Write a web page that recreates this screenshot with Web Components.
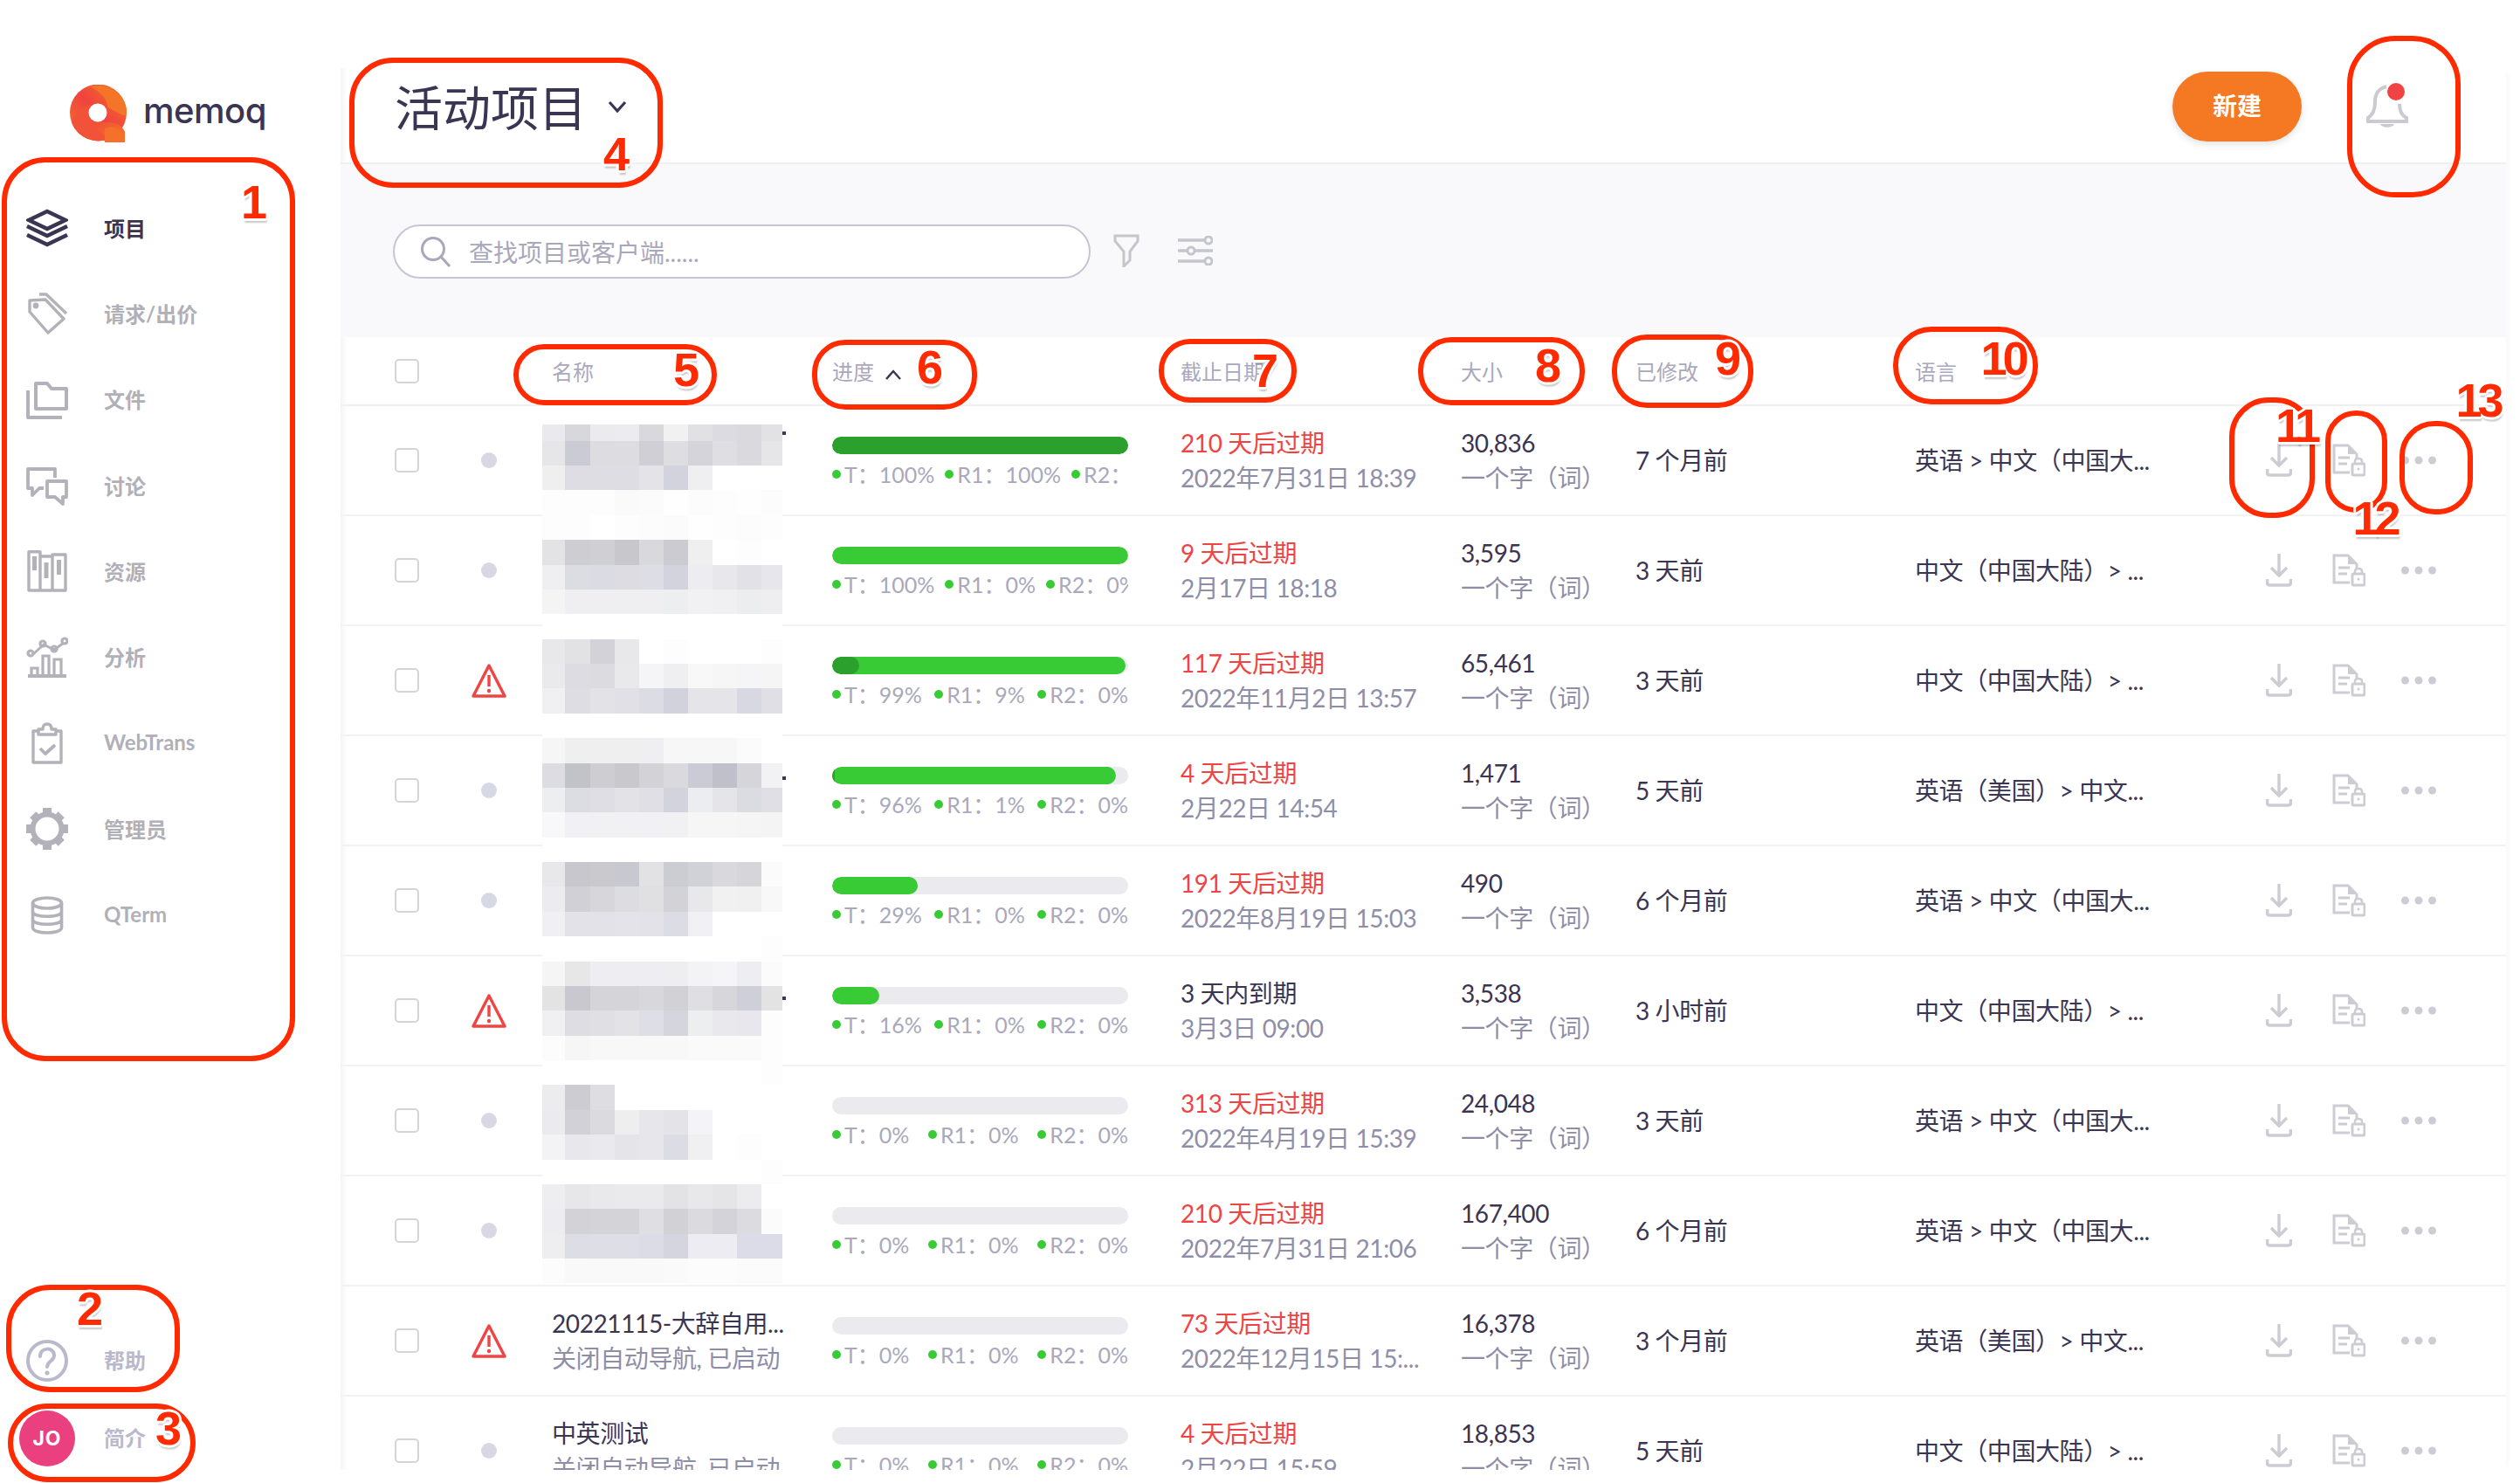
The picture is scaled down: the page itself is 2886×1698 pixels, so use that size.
<!DOCTYPE html>
<html lang="zh">
<head>
<meta charset="utf-8">
<title>memoQ</title>
<style>
  html, body { margin: 0; height: 1698px; overflow: hidden; background: #fff; }
  body { position: relative; font-family: Lato, "Noto Sans CJK SC", sans-serif; color: #3a3553; }
  #app { display: flex; height: 1698px; }
</style>
</head>
<body>
<div id="app">
  <memoq-sidebar></memoq-sidebar>
  <project-panel></project-panel>
</div>
<div id="notes"></div>

<script>
const FONT = 'Lato, "Noto Sans CJK SC", sans-serif';

const NAV_ICONS = {
    layers: `<svg viewBox="0 0 48 48" fill="none" stroke="#3a3553" stroke-width="4.5"><path d="M24 5 L45 15 L24 25 L3 15 Z"/><path d="M1 22 L24 33 L47 22"/><path d="M1 32 L24 43 L47 32"/></svg>`,
    tag: `<svg viewBox="0 0 48 48" fill="none" stroke="#b3b2ba" stroke-width="3.4" stroke-linejoin="round"><path d="M4 9 L4 22 L25 46 L43 30 L22 8 Z"/><circle cx="11" cy="15" r="3.4" fill="#b3b2ba" stroke="none"/><path d="M15 2 L23 2 L46 24"/></svg>`,
    folder: `<svg viewBox="0 0 48 48" fill="none" stroke="#b3b2ba" stroke-width="4" stroke-linejoin="round"><path d="M11 5 L24 5 L29 11 L46 11 L46 34 L11 34 Z"/><path d="M2 13 L2 44 L41 44"/></svg>`,
    chat: `<svg viewBox="0 0 48 48" fill="none" stroke="#b3b2ba" stroke-width="3.8" stroke-linejoin="round"><path d="M33 15 V5 H2 V27 H7 V35 L15 27 H20"/><path d="M24 19 H46 V37 H42 V45 L33 37 H24 Z"/></svg>`,
    books: `<svg viewBox="0 0 48 48" fill="none" stroke="#b3b2ba" stroke-width="3.4" stroke-linejoin="round"><path d="M3 1.700 H16 V46 H3 Z M16 7 H30 V46 H16 Z M30 5 H45 V46 H30 Z"/><path d="M9.500 7 V23 M23 14 V32 M37.500 11 V28" stroke-width="5"/></svg>`,
    chart: `<svg viewBox="0 0 48 48" fill="none" stroke="#b3b2ba" stroke-width="3.2"><path d="M8 20 L20 9 L32 15 L43 7" stroke-width="3"/><circle cx="5" cy="19" r="3" /><circle cx="19" cy="8" r="3"/><circle cx="32" cy="14" r="3"/><circle cx="44" cy="5" r="3"/><path d="M6 44 V36 H13 V44 M19 44 V22 H26 V44 M32 44 V26 H40 V44"/><path d="M2 45 H46" stroke-width="4"/></svg>`,
    clipboard: `<svg viewBox="0 0 48 48" fill="none" stroke="#b3b2ba" stroke-width="3.4" stroke-linejoin="round"><path d="M14 10 L8 10 L8 46 L40 46 L40 10 L34 10"/><path d="M14 14 L14 8 L19 8 Q19 2 24 2 Q29 2 29 8 L34 8 L34 14 Z"/><path d="M16 30 L22 36 L33 26" stroke-width="3.8"/></svg>`,
    gear: `<svg viewBox="0 0 48 48"><circle cx="24" cy="24" r="16.5" fill="none" stroke="#b3b2ba" stroke-width="6"/><g fill="#b3b2ba"><rect x="19" y="0" width="10" height="7"/><rect x="19" y="41" width="10" height="7"/><rect x="0" y="19" width="7" height="10"/><rect x="41" y="19" width="7" height="10"/><rect x="19" y="1" width="10" height="7" transform="rotate(45 24 24)"/><rect x="19" y="1" width="10" height="7" transform="rotate(135 24 24)"/><rect x="19" y="1" width="10" height="7" transform="rotate(225 24 24)"/><rect x="19" y="1" width="10" height="7" transform="rotate(315 24 24)"/></g></svg>`,
    database: `<svg viewBox="0 0 48 48" fill="none" stroke="#b3b2ba" stroke-width="3.6"><ellipse cx="24" cy="10" rx="16.5" ry="6"/><path d="M7.500 10 V38 C7.500 46 40.500 46 40.500 38 V10"/><path d="M7.500 20 C7.500 27 40.500 27 40.500 20"/><path d="M7.500 29 C7.500 36 40.500 36 40.500 29"/></svg>`,
    help: `<svg viewBox="0 0 48 48" fill="none" stroke="#b9b8cc" stroke-width="4"><circle cx="24" cy="24" r="22"/><path d="M16 19 C16 8 32 8 32 18 C32 25 24 24 24 31" stroke-linecap="round"/><circle cx="24" cy="38" r="2.500" fill="#b9b8cc" stroke="none"/></svg>`
};

class NavItem extends HTMLElement {
    constructor() {
        super();
        this.attachShadow({ mode: 'open' });
    }

    connectedCallback() {
        const icon = this.getAttribute('icon');
        const active = this.hasAttribute('active');
        const color = this.getAttribute('color') || (active ? '#3a3553' : '#b1b0b8');
        this.shadowRoot.innerHTML = `
            <style>
                :host { display: flex; align-items: center; height: 98.300px; padding-left: 30px; }
                .icon { width: 48px; height: 48px; flex: none; }
                .icon svg { display: block; width: 48px; height: 48px; }
                .label { margin-left: 41px; font: 700 24px ${FONT}; color: ${color}; position: relative; top: -1px; }
            </style>
            <div class="icon">${NAV_ICONS[icon]}</div>
            <div class="label"><slot></slot></div>
        `;
    }
}
customElements.define('nav-item', NavItem);

class MemoqSidebar extends HTMLElement {
    constructor() {
        super();
        this.attachShadow({ mode: 'open' });
        this.shadowRoot.innerHTML = `
            <style>
                :host { display: flex; flex-direction: column; flex: none; width: 390px; height: 1698px; background: #fff; }
                .logo { display: flex; align-items: center; height: 65px; margin-top: 97px; margin-left: 80px; }
                .logo svg { width: 66px; height: 66px; flex: none; }
                .logo span { margin-left: 18px; font: 500 40px Inter, sans-serif; letter-spacing: -.5px; color: #3a3553; position: relative; top: -3px; }
                nav { margin-top: 50px; }
                .bottom { margin-top: auto; padding-bottom: 11px; }
                .profile { display: flex; align-items: center; height: 80px; padding-left: 22px; }
                .avatar { width: 64px; height: 64px; border-radius: 50%; background: #ea4080; color: #fff;
                    font: 700 23px Inter, sans-serif; display: flex; align-items: center; justify-content: center; letter-spacing: 1px; }
                .profile span { margin-left: 33px; font: 700 24px ${FONT}; color: #b9b8cc; position: relative; top: -2px; }
            </style>
            <div class="logo">
                <svg viewBox="0 0 66 66">
                    <defs>
                        <linearGradient id="a" x1="0" y1="1" x2="1" y2="0"><stop offset="0" stop-color="#f57823"/><stop offset=".5" stop-color="#f0433f"/><stop offset="1" stop-color="#f57823"/></linearGradient>
                        <linearGradient id="b" x1="0" y1="0" x2="1" y2="1"><stop offset="0" stop-color="#f0433f"/><stop offset="1" stop-color="#f57823"/></linearGradient>
                    </defs>
                    <circle cx="32.500" cy="32" r="32.500" fill="url(#a)"/>
                    <path d="M23 2 C34 8 44 16 43 26 C54 30 64 40 65 32 C66 14 46 -4 23 2 Z" fill="#f47428"/>
                    <path d="M2 42 C6 30 16 24 24 23 C20 35 30 52 47 62 C30 68 8 62 2 42 Z" fill="#f25238"/>
                    <path d="M22 35 C26 48 40 64 63 65 L63 54 C60 46 52 43 44 43 C36 44 26 42 22 35 Z" fill="url(#b)"/>
                    <path d="M40 50 C52 46 62 50 63 66 L40 66 Z" fill="#f4702b"/>
                    <circle cx="32" cy="32" r="10.500" fill="#fff"/>
                </svg>
                <span>memoq</span>
            </div>
            <nav>
                <nav-item icon="layers" active>项目</nav-item>
                <nav-item icon="tag">请求/出价</nav-item>
                <nav-item icon="folder">文件</nav-item>
                <nav-item icon="chat">讨论</nav-item>
                <nav-item icon="books">资源</nav-item>
                <nav-item icon="chart">分析</nav-item>
                <nav-item icon="clipboard">WebTrans</nav-item>
                <nav-item icon="gear">管理员</nav-item>
                <nav-item icon="database">QTerm</nav-item>
            </nav>
            <div class="bottom">
                <nav-item icon="help" color="#b9b8cc">帮助</nav-item>
                <div class="profile"><div class="avatar">JO</div><span>简介</span></div>
            </div>
        `;
    }
}
customElements.define('memoq-sidebar', MemoqSidebar);

class PanelHeader extends HTMLElement {
    constructor() {
        super();
        this.attachShadow({ mode: 'open' });
        this.shadowRoot.innerHTML = `
            <style>
                :host { display: flex; align-items: flex-start; height: 108px; padding-left: 62px; border-bottom: 2px solid #f0f0f4; }
                h1 { margin: 0; font: 400 55px/90px ${FONT}; color: #3a3553; }
                .chev { margin: 37px 0 0 24px; width: 22px; height: 14px; }
                button { margin: 4px 0 0 auto; width: 148px; height: 80px; border: 0; padding: 0 0 5px; border-radius: 40px; background: #f57823;
                    color: #fff; font: 700 28px ${FONT}; box-shadow: 0 3px 8px rgba(0,0,0,.12); }
                .bell { margin: 17px 112px 0 74px; width: 48px; height: 52px; }
                .bell svg { display: block; width: 48px; height: 52px; overflow: visible; }
            </style>
            <h1>活动项目</h1>
            <svg class="chev" viewBox="0 0 22 14" fill="none" stroke="#3a3553" stroke-width="3.200"><path d="M2 2 L11 12 L20 2"/></svg>
            <button>新建</button>
            <div class="bell">
                <svg viewBox="0 0 48 52" fill="none" stroke="#cacad0" stroke-width="4">
                    <path d="M23 4 C12 7 10 14 10 22 C10 30 8 36 2 40 L2 44 L46 44 L46 40 C40 37 38 32 38 24"/>
                    <path d="M16 47 C18 52 30 52 32 47 Z" fill="#cacad0" stroke="none"/>
                    <circle cx="34" cy="10" r="10" fill="#f04444" stroke="none"/>
                </svg>
            </div>
        `;
    }
}
customElements.define('panel-header', PanelHeader);

class PanelToolbar extends HTMLElement {
    constructor() {
        super();
        this.attachShadow({ mode: 'open' });
        this.shadowRoot.innerHTML = `
            <style>
                :host { display: flex; align-items: flex-start; height: 129px; padding: 69px 0 0 60px; background: #f9f9fb; }
                .search { display: flex; align-items: center; box-sizing: border-box; width: 799px; height: 62px;
                    border: 2px solid #c6c5d6; border-radius: 31px; background: #fff; padding-left: 29px; }
                .search svg { width: 36px; height: 36px; flex: none; }
                .search span { margin-left: 20px; font: 400 28px ${FONT}; color: #a9a8bb; }
                .filter { margin: 11px 0 0 26px; width: 30px; height: 38px; }
                .tune { margin: 13px 0 0 44px; width: 40px; height: 34px; }
            </style>
            <div class="search">
                <svg viewBox="0 0 36 36" fill="none" stroke="#a9a8bb" stroke-width="3"><circle cx="15" cy="15" r="12.500"/><path d="M24 24 L34 35"/></svg>
                <span>查找项目或客户端......</span>
            </div>
            <svg class="filter" viewBox="0 0 30 38" fill="none" stroke="#c5c5cc" stroke-width="3"><path d="M2 2 H28 V8 L19 20 V30 L12 37 V20 L2 8 Z"/></svg>
            <svg class="tune" viewBox="0 0 40 34" fill="none" stroke="#c5c5cc" stroke-width="3"><path d="M0 5 H30 M0 17 H10 M20 17 H40 M0 29 H30" stroke-width="3.500"/><circle cx="35" cy="5" r="4" /><circle cx="15" cy="17" r="4"/><circle cx="35" cy="29" r="4"/></svg>
        `;
    }
}
customElements.define('panel-toolbar', PanelToolbar);

// positions of the table columns, shared by the header and the rows
const TABLE_GRID = `display: grid; grid-template-columns: 84px 48px 48px 321px 399px 321px 200px 320px 402px 1fr; padding-left: 62px; align-items: center;`;

class TableHead extends HTMLElement {
    constructor() {
        super();
        this.attachShadow({ mode: 'open' });
        this.shadowRoot.innerHTML = `
            <style>
                :host { ${TABLE_GRID} height: 77px; border-bottom: 2px solid #f0f0f3; font: 400 24px ${FONT}; color: #a9a8bc; }
                .box { width: 28px; height: 28px; box-sizing: border-box; border: 2px solid #d4d4d9; border-radius: 5px; }
                .sort { display: inline-block; margin-left: 12px; width: 20px; height: 12px; }
            </style>
            <div><div class="box"></div></div>
            <div style="grid-column: 4">名称</div>
            <div>进度<svg class="sort" viewBox="0 0 20 12" fill="none" stroke="#3a3553" stroke-width="2.400"><path d="M2 11 L10 2 L18 11"/></svg></div>
            <div>截止日期</div><div>大小</div><div>已修改</div><div>语言</div>
        `;
    }
}
customElements.define('table-head', TableHead);

const ROW_ICONS = `
    <svg width="30" height="38" viewBox="0 0 30 38" fill="none" stroke="#cdccd4" stroke-width="3.400"><path d="M15 0 V24 M6 16 L15 25 L24 16"/><path d="M1.500 29 V33 Q1.500 36 4.500 36 H25.500 Q28.500 36 28.500 33 V29" stroke-width="3.600"/></svg>
    <svg width="38" height="38" viewBox="0 0 38 38" fill="none" stroke="#cdccd4" stroke-width="3"><path d="M20 33 H2 V2 H18 L28 12 V17"/><path d="M18 2 V12 H28" fill="#cdccd4" stroke="none"/><path d="M7 16 H20 M7 23 H17"/><rect x="23" y="23" width="14" height="13" rx="1.500" stroke-width="3"/><path d="M26 23 V20 Q26 17 30 17 Q34 17 34 20 V23" stroke-width="2.500"/><circle cx="30" cy="29" r="1.500" fill="#cdccd4" stroke="none"/></svg>
    <svg width="40" height="10" viewBox="0 0 40 10" fill="#cdccd4"><circle cx="4.500" cy="5" r="4.500"/><circle cx="20" cy="5" r="4.500"/><circle cx="35.500" cy="5" r="4.500"/></svg>`;

class ProjectRow extends HTMLElement {
    constructor() {
        super();
        this.attachShadow({ mode: 'open' });
    }

    render(p) {
        const status = p.warn
            ? `<svg class="warn" viewBox="0 0 40 40" fill="none" stroke="#f04444" stroke-width="3.400"><path d="M20 3 L38 38 H2 Z" stroke-linejoin="round"/><path d="M20 14 V27" stroke-width="3.400"/><circle cx="20" cy="32" r="2.200" fill="#f04444" stroke="none"/></svg>`
            : `<div class="dot"></div>`;
        const name = p.name ? `<div>${p.name}</div><div class="sub">关闭自动导航, 已启动</div>` : '';
        const legend = [['T', p.t], ['R1', p.r1], ['R2', p.r2]].map(([k, v]) =>
            `<span class="item"><i></i>${k}：<b>${v}%</b></span>`).join('');
        this.shadowRoot.innerHTML = `
            <style>
                :host { ${TABLE_GRID} box-sizing: border-box; height: 126px; border-bottom: 2px solid #f2f2f4;
                    font: 400 28px ${FONT}; color: #3a3553; }
                .box { width: 28px; height: 28px; box-sizing: border-box; border: 2px solid #d4d4d9; border-radius: 5px; }
                .status { display: flex; justify-content: center; }
                .dot { width: 18px; height: 18px; border-radius: 50%; background: #d8d8e4; }
                .warn { width: 40px; height: 40px; }
                .cell { line-height: 40px; white-space: nowrap; letter-spacing: -.4px; }
                .sub { color: #8f8ea8; }
                .due { color: #f04444; }
                .bar { position: relative; width: 339px; height: 20px; border-radius: 10px; background: #ebebef; overflow: hidden; }
                .bar div { position: absolute; left: 0; top: 0; height: 100%; border-radius: 10px; }
                .light { background: #39cb35; }
                .dark { background: #2ca02c; }
                .legend { display: flex; justify-content: space-between; gap: 12px; width: 339px; overflow: hidden; margin-top: 11px;
                    font: 400 25px/24px ${FONT}; letter-spacing: 0; color: #a9a8bc; white-space: nowrap; }
                .item { flex: none; display: inline-flex; align-items: center; }
                .item i { width: 10px; height: 10px; border-radius: 50%; background: #39cb35; margin-right: 4px; }
                .item b { font-weight: 400; margin-left: 0; }
                .actions { display: flex; align-items: center; }
                .actions svg:nth-child(2) { margin-left: 46px; }
                .actions svg:nth-child(3) { margin-left: 41px; }
            </style>
            <div><div class="box"></div></div>
            <div class="status">${status}</div>
            <div class="cell" style="grid-column: 4">${name}</div>
            <div class="cell">
                <div class="bar">
                    ${p.t ? `<div class="light" style="width:${p.t}%"></div>` : ''}
                    ${p.r1 ? `<div class="dark" style="width:${p.r1}%"></div>` : ''}
                </div>
                <div class="legend">${legend}</div>
            </div>
            <div class="cell"><div class="${p.ok ? '' : 'due'}">${p.due}</div><div class="sub">${p.date}</div></div>
            <div class="cell"><div>${p.size}</div><div class="sub">一个字（词）</div></div>
            <div class="cell">${p.mod}</div>
            <div class="cell">${p.lang}</div>
            <div class="actions">${ROW_ICONS}</div>
        `;
    }
}
customElements.define('project-row', ProjectRow);

// redaction over the name column: grey levels, one row of the mosaic per string
const MOSAIC = [
    'eaeaee d8d8dc ebebed ececf0 d9d9dd f1f1f1 e1e1e3 dbdbe1 dadade e2e2e4',
    'e6e6e8 cbcbd5 dddde1 dddde1 cfcfd5 dddde2 d4d4da dedee3 d9d9de e6e6e8',
    'efeff0 dddde3 dddde3 dddde3 e3e3e8 d3d3dd efeff1 ffffff ffffff ffffff',
    'fdfdfd fdfdfd fdfdfd fafafa fbfbfb fefefe fcfcfc fdfdfd fefefe fcfcfc',
    'fdfdfd fdfdfd ffffff fdfdfd fcfcfc fbfbfb fefefe fdfdfd fcfcfc fdfdfd',
    'e3e3e5 cdcdd2 cfcfd4 c8c8cc d9d9dd cbcbd1 efefef ffffff fdfdfd ffffff',
    'efeff1 dcdce3 dbdbe3 dcdce2 dddde5 d3d3dd ececf1 e8e8ec e1e1e7 e6e6ec',
    'f4f4f4 efeff1 efeff2 efeff1 efeff1 edeef0 f1f1f4 f0f0f2 ecedef eeeef0',
    'ffffff ffffff ffffff ffffff ffffff ffffff ffffff ffffff ffffff ffffff',
    'e8e8ea e2e2e4 d2d2d8 e8e8ea ffffff fdfdfd ffffff ffffff ffffff fdfdfd',
    'eaeaec dcdce2 dbdbe0 e9e9eb f5f5f7 efeff1 f8f8f8 f6f6f6 f5f4f6 f5f5f5',
    'f0f0f2 dddde3 e2e2e7 e0e0e6 dcdce5 d2d2dd e4e4e9 e4e4e9 d8d8e2 dfdfe5',
    'ffffff ffffff ffffff ffffff ffffff ffffff ffffff ffffff ffffff ffffff',
    'f6f6f6 efefef efeff0 efeff0 efeff1 f7f7f7 f7f7f7 f7f7f7 fbfbfb ffffff',
    'dcdce2 c2c2c9 cdcdd2 c8c8cd d2d2d7 dadade cbcbd5 c0c0ca d5d5da f2f2f4',
    'edeef0 dcdce3 dedee4 e2e2e7 dfdfe5 d3d3dd ebedf0 e4e4e9 dbdbe2 dfdfe5',
    'f8f8fb f1f1f5 f1f1f4 f1f1f4 f1f1f5 f1f1f4 f6f6f7 f6f6f7 f5f5f6 f4f4f5',
    'ffffff ffffff ffffff ffffff ffffff ffffff ffffff ffffff ffffff ffffff',
    'e8e8ea c7c7cd c9c9ce c8c8d0 e2e2e4 ccccd3 d1d1d8 d8d8dd d5d5da fbfbfb',
    'ececf0 d0d0d6 d7d7db dddde1 e0e0e3 d2d2d7 e8e8ea f1f1f1 f0f0f1 f8f8f8',
    'f0f0f4 e2e2e8 e2e2e8 e3e3e9 e2e2e8 dcdce5 f1f1f5 ffffff ffffff ffffff',
    'ffffff ffffff ffffff ffffff ffffff ffffff ffffff ffffff ffffff fdfdfd',
    'f5f5f6 e7e7e7 eeeef2 eeeef2 eeeef2 eeeef0 f3f3f6 f5f5f7 ededf2 fbfbfb',
    'e3e3e4 c8c8ce d5d5d9 d5d5d9 d7d7dc d2d2d6 dedee3 d6d6db cecfd8 e3e3e4',
    'f0f0f2 dddde3 dfdfe4 e2e2e7 dedee7 d5d5de edeeef e8e8ed e7e7ed fdfdfd',
    'fcfcfc f6f6f6 f8f8f9 f8f8f9 f8f8f8 f8f8f8 fafafb fafafb fafafa fdfdfd',
    'ffffff ffffff ffffff ffffff ffffff ffffff ffffff ffffff ffffff fdfdfd',
    'ececee ccccd2 dddde2 ffffff ffffff ffffff ffffff ffffff ffffff ffffff',
    'eaeaef d1d1d7 dadadf eeeeee e6e6eb e3e3e8 f4f4f8 ffffff ffffff ffffff',
    'f3f3f5 e8e8ec eaeaee e4e4e9 e6e6eb dcdce5 f0f0f2 ffffff fdfdfd ffffff',
    'ffffff ffffff ffffff ffffff ffffff ffffff ffffff ffffff ffffff fdfdfd',
    'eeeef0 e7e7e9 e9e9eb eaeaec eaeaec e3e3e5 e8e8ea e5e5e8 ececee ffffff',
    'ececf1 d2d2d7 d4d4d8 d4d4d8 dedee3 d1d1d6 dadadf d3d3d9 dcdce0 fbfbfc',
    'eeeef0 dddde5 dedee6 dedee6 dcdce6 d5d5e0 ececf2 ececf2 dcdce8 dcdce8',
    'fcfcfc f9f9fa f9f9fa f9f9fa f9f9fa fafafa fcfcfc fcfcfc fbfbfb fbfbfb'
];

class MosaicBlock extends HTMLElement {
    constructor() {
        super();
        this.attachShadow({ mode: 'open' });
        const cells = MOSAIC.map(r => r.split(' ').map(c => `<i style="background:#${c}"></i>`).join('')).join('');
        this.shadowRoot.innerHTML = `
            <style>
                :host { position: absolute; left: 231px; top: 408px; display: block; width: 275px; background: #fff; }
                .grid { display: grid; grid-template-columns: 26px 28.700px 28px 28px 28px 28.300px 28px 28px 28.300px 23.700px;
                    grid-template-rows: 18.700px repeat(34, 28.380px); }
                .tick { position: absolute; left: 275px; width: 4px; height: 4px; background: #3a3553; }
            </style>
            <div class="grid">${cells}</div>
            <div class="tick" style="top: 8px"></div>
            <div class="tick" style="top: 403px"></div>
            <div class="tick" style="top: 655px"></div>
        `;
    }
}
customElements.define('mosaic-block', MosaicBlock);

const PROJECTS = [
    { due: '210 天后过期', date: '2022年7月31日 18:39', size: '30,836', mod: '7 个月前', lang: '英语 > 中文（中国大...', t: 100, r1: 100, r2: 0 },
    { due: '9 天后过期', date: '2月17日 18:18', size: '3,595', mod: '3 天前', lang: '中文（中国大陆）> ...', t: 100, r1: 0, r2: 0 },
    { due: '117 天后过期', date: '2022年11月2日 13:57', size: '65,461', mod: '3 天前', lang: '中文（中国大陆）> ...', t: 99, r1: 9, r2: 0, warn: true },
    { due: '4 天后过期', date: '2月22日 14:54', size: '1,471', mod: '5 天前', lang: '英语（美国）> 中文...', t: 96, r1: 1, r2: 0 },
    { due: '191 天后过期', date: '2022年8月19日 15:03', size: '490', mod: '6 个月前', lang: '英语 > 中文（中国大...', t: 29, r1: 0, r2: 0 },
    { due: '3 天内到期', ok: true, date: '3月3日 09:00', size: '3,538', mod: '3 小时前', lang: '中文（中国大陆）> ...', t: 16, r1: 0, r2: 0, warn: true },
    { due: '313 天后过期', date: '2022年4月19日 15:39', size: '24,048', mod: '3 天前', lang: '英语 > 中文（中国大...', t: 0, r1: 0, r2: 0 },
    { due: '210 天后过期', date: '2022年7月31日 21:06', size: '167,400', mod: '6 个月前', lang: '英语 > 中文（中国大...', t: 0, r1: 0, r2: 0 },
    { name: '20221115-大辞自用...', due: '73 天后过期', date: '2022年12月15日 15:...', size: '16,378', mod: '3 个月前', lang: '英语（美国）> 中文...', t: 0, r1: 0, r2: 0, warn: true },
    { name: '中英测试', due: '4 天后过期', date: '2月22日 15:59', size: '18,853', mod: '5 天前', lang: '中文（中国大陆）> ...', t: 0, r1: 0, r2: 0 }
];

class ProjectPanel extends HTMLElement {
    constructor() {
        super();
        this.attachShadow({ mode: 'open' });
        this.shadowRoot.innerHTML = `
            <style>
                :host { display: block; position: relative; flex: none; width: 2480px; height: 1605px; margin-top: 78px; overflow: hidden;
                    background: #fff; box-shadow: inset 8px 0 6px -5px rgba(0,0,0,.05), 6px 0 6px -4px rgba(0,0,0,.03); }
            </style>
            <panel-header></panel-header>
            <panel-toolbar></panel-toolbar>
            <table-head></table-head>
            <div id="rows"></div>
            <mosaic-block></mosaic-block>
        `;
        const rows = this.shadowRoot.getElementById('rows');
        PROJECTS.forEach(p => {
            const row = document.createElement('project-row');
            rows.appendChild(row);
            row.render(p);
        });
    }
}
customElements.define('project-panel', ProjectPanel);

class NoteRing extends HTMLElement {
    constructor() {
        super();
        this.attachShadow({ mode: 'open' });
    }

    connectedCallback() {
        const [x, y, w, h, r] = this.getAttribute('box').split(',');
        this.shadowRoot.innerHTML = `
            <style>
                :host { position: absolute; left: ${x}px; top: ${y}px; width: ${w}px; height: ${h}px; box-sizing: border-box;
                    border: 6px solid #ff2a00; border-radius: ${r}px; pointer-events: none; }
            </style>
        `;
    }
}
customElements.define('note-ring', NoteRing);

class NoteNumber extends HTMLElement {
    constructor() {
        super();
        this.attachShadow({ mode: 'open' });
    }

    connectedCallback() {
        const [cx, cy] = this.getAttribute('at').split(',');
        this.shadowRoot.innerHTML = `
            <style>
                :host { position: absolute; left: ${cx}px; top: ${cy}px; transform: translate(-50%, -50%);
                    font: 700 54px/54px "Liberation Sans", sans-serif; color: #ff2a00; letter-spacing: -5px; padding-right: 5px; white-space: nowrap;
                    text-shadow: 3px 0 #fff, -3px 0 #fff, 0 3px #fff, 0 -3px #fff, 2px 2px #fff, -2px 2px #fff, 2px -2px #fff, -2px -2px #fff, 1px 5px 2px rgba(0,0,0,.22); }
            </style>
            <slot></slot>
        `;
    }
}
customElements.define('note-number', NoteNumber);

const notes = document.getElementById('notes');
[
    [2, 180, 336, 1035, 50], [7, 1471, 199, 123, 50], [9, 1607, 215, 90, 45], [400, 66, 359, 149, 50],
    [588, 394, 233, 70, 35], [930, 389, 189, 80, 38], [1327, 388, 158, 73, 36], [1624, 386, 191, 78, 38],
    [1846, 383, 162, 84, 40], [2168, 374, 166, 89, 44], [2688, 41, 130, 185, 55], [2553, 455, 98, 138, 45],
    [2663, 470, 71, 117, 35], [2748, 482, 84, 107, 40]
].forEach(b => {
    const ring = document.createElement('note-ring');
    ring.setAttribute('box', b.join(','));
    notes.appendChild(ring);
});
[
    [291, 231], [103, 1498], [193, 1635], [706, 176], [786, 423], [1065, 420], [1449, 424],
    [1773, 418], [1979, 410], [2296, 410], [2632, 487], [2722, 593], [2840, 458]
].forEach((at, i) => {
    const num = document.createElement('note-number');
    num.setAttribute('at', at.join(','));
    num.textContent = i + 1;
    notes.appendChild(num);
});
</script>
</body>
</html>
